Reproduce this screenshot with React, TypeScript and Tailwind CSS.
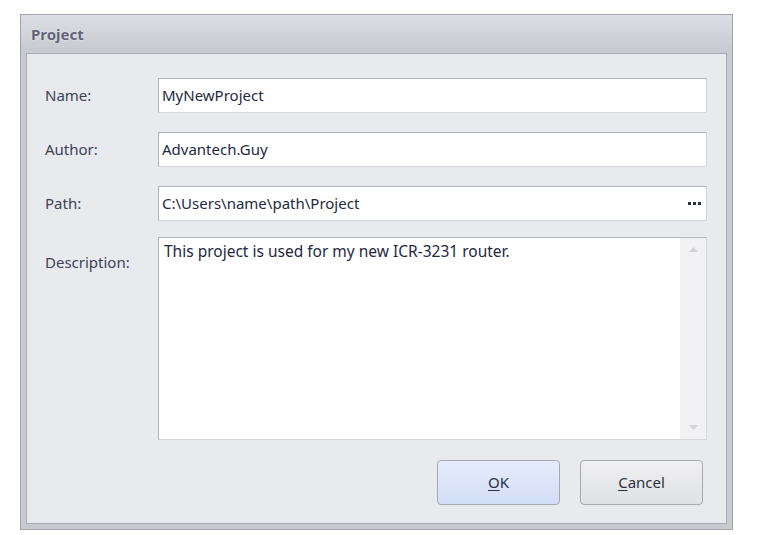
import React from "react";

const font = { fontFamily: '"Noto Sans", "Open Sans", sans-serif' };

function Field({ label, value, trailing }: { label: string; value: string; trailing?: React.ReactNode }) {
  return (
    <div className="flex items-center">
      <label className="w-[113px] text-[15px] text-[#3c4257]">{label}</label>
      <div className="flex h-[35px] flex-1 items-center border border-t-[#b3b5bd] border-l-[#b3b5bd] border-r-[#d6d7dc] border-b-[#d6d7dc] bg-white pl-[3px] pr-[5px]">
        <span className="flex-1 text-[15px] text-[#1f2940]">{value}</span>
        {trailing}
      </div>
    </div>
  );
}

export default function App() {
  return (
    <div className="h-[535px] w-[757px] bg-white pl-[20px] pt-[14px]" style={font}>
      {/* Dialog frame */}
      <div className="flex h-[516px] w-[713px] flex-col border border-[#a2a4ad] bg-[#c9cad0]">
        <div className="flex h-[38px] items-center bg-gradient-to-b from-[#dddee3] to-[#c8c9ce] px-[10px]">
          <span className="text-[15px] font-bold text-[#5f6579] [text-shadow:0_0_2px_rgba(255,255,255,0.8)]">
            Project
          </span>
        </div>
        <div className="mx-[5px] mb-[5px] flex flex-1 flex-col border border-[#a9abb3] bg-[#e9eaee] pl-[18px] pr-[19px] pt-[24px]">
          <div className="flex flex-col gap-[19px]">
            <Field label="Name:" value="MyNewProject" />
            <Field label="Author:" value="Advantech.Guy" />
            <Field
              label="Path:"
              value="C:\Users\name\path\Project"
              trailing={
                <span className="flex gap-[2px]">
                  <span className="h-[3px] w-[3px] bg-[#2a2f3d]" />
                  <span className="h-[3px] w-[3px] bg-[#2a2f3d]" />
                  <span className="h-[3px] w-[3px] bg-[#2a2f3d]" />
                </span>
              }
            />
          </div>
          <div className="mt-[16px] flex">
            <label className="w-[113px] pt-[14px] text-[15px] text-[#3c4257]">Description:</label>
            <div className="flex h-[203px] flex-1 border border-t-[#b3b5bd] border-l-[#b3b5bd] border-r-[#d6d7dc] border-b-[#d6d7dc] bg-white">
              <p className="flex-1 pl-[5px] pt-[2px] text-[15.5px] text-[#1f2940]">
                This project is used for my new ICR-3231 router.
              </p>
              <div className="flex w-[26px] flex-col items-center justify-between bg-[#f1f1f4] py-[9px]">
                <svg width="9" height="5" viewBox="0 0 9 5"><path d="M4.5 0L9 5H0z" fill="#d3d4da" /></svg>
                <svg width="9" height="5" viewBox="0 0 9 5"><path d="M0 0h9L4.5 5z" fill="#d3d4da" /></svg>
              </div>
            </div>
          </div>
          <div className="mt-[20px] flex justify-end gap-[20px] pr-[4px]">
            <button className="h-[45px] w-[123px] rounded-[4px] border border-[#a7a9b2] bg-gradient-to-b from-[#e6ecfb] to-[#d2ddf7] text-[15px] text-[#2b3040]">
              <span className="underline underline-offset-2">O</span>K
            </button>
            <button className="h-[45px] w-[123px] rounded-[4px] border border-[#a7a9b2] bg-gradient-to-b from-[#f0f0f3] to-[#e0e1e5] text-[15px] text-[#2b3040]">
              <span className="underline underline-offset-2">C</span>ancel
            </button>
          </div>
        </div>
      </div>
    </div>
  );
}
